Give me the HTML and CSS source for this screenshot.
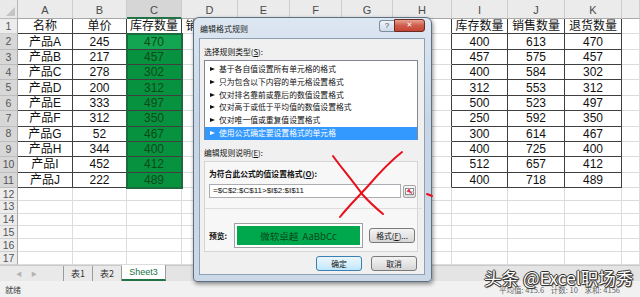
FILE: index.html
```html
<!DOCTYPE html>
<html lang="zh-CN">
<head>
<meta charset="utf-8">
<title>编辑格式规则</title>
<link rel="stylesheet" href="styles.css">
</head>
<body>
<div class="app">
  <div class="sheet">
    <div class="corner"><span class="tri"></span></div>
    <div class="ch">A</div><div class="ch">B</div><div class="ch sel">C</div><div class="ch">D</div><div class="ch">E</div><div class="ch">F</div><div class="ch">G</div><div class="ch">H</div><div class="ch">I</div><div class="ch">J</div><div class="ch">K</div><div class="ch"></div>

    <div class="rh">1</div><div class="c bd">名称</div><div class="c bd">单价</div><div class="c bd">库存数量</div><div class="c">销售数量</div><div class="c"></div><div class="c"></div><div class="c"></div><div class="c bl"></div><div class="c bd">库存数量</div><div class="c bd">销售数量</div><div class="c bd">退货数量</div><div class="c"></div>

    <div class="rh rs">2</div><div class="c bd">产品A</div><div class="c bd">245</div><div class="c bd g act">470</div><div class="c"></div><div class="c"></div><div class="c"></div><div class="c"></div><div class="c bl"></div><div class="c bd">400</div><div class="c bd">613</div><div class="c bd">470</div><div class="c"></div>
    <div class="rh rs">3</div><div class="c bd">产品B</div><div class="c bd">217</div><div class="c bd g">457</div><div class="c"></div><div class="c"></div><div class="c"></div><div class="c"></div><div class="c bl"></div><div class="c bd">457</div><div class="c bd">575</div><div class="c bd">457</div><div class="c"></div>
    <div class="rh rs">4</div><div class="c bd">产品C</div><div class="c bd">278</div><div class="c bd g">302</div><div class="c"></div><div class="c"></div><div class="c"></div><div class="c"></div><div class="c bl"></div><div class="c bd">400</div><div class="c bd">584</div><div class="c bd">302</div><div class="c"></div>
    <div class="rh rs">5</div><div class="c bd">产品D</div><div class="c bd">200</div><div class="c bd g">312</div><div class="c"></div><div class="c"></div><div class="c"></div><div class="c"></div><div class="c bl"></div><div class="c bd">312</div><div class="c bd">553</div><div class="c bd">312</div><div class="c"></div>
    <div class="rh rs">6</div><div class="c bd">产品E</div><div class="c bd">333</div><div class="c bd g">497</div><div class="c"></div><div class="c"></div><div class="c"></div><div class="c"></div><div class="c bl"></div><div class="c bd">500</div><div class="c bd">523</div><div class="c bd">497</div><div class="c"></div>
    <div class="rh rs">7</div><div class="c bd">产品F</div><div class="c bd">312</div><div class="c bd g">350</div><div class="c"></div><div class="c"></div><div class="c"></div><div class="c"></div><div class="c bl"></div><div class="c bd">250</div><div class="c bd">592</div><div class="c bd">350</div><div class="c"></div>
    <div class="rh rs">8</div><div class="c bd">产品G</div><div class="c bd">52</div><div class="c bd g">467</div><div class="c"></div><div class="c"></div><div class="c"></div><div class="c"></div><div class="c bl"></div><div class="c bd">300</div><div class="c bd">614</div><div class="c bd">467</div><div class="c"></div>
    <div class="rh rs">9</div><div class="c bd">产品H</div><div class="c bd">344</div><div class="c bd g">400</div><div class="c"></div><div class="c"></div><div class="c"></div><div class="c"></div><div class="c bl"></div><div class="c bd">400</div><div class="c bd">725</div><div class="c bd">400</div><div class="c"></div>
    <div class="rh rs">10</div><div class="c bd">产品I</div><div class="c bd">452</div><div class="c bd g">412</div><div class="c"></div><div class="c"></div><div class="c"></div><div class="c"></div><div class="c bl"></div><div class="c bd">512</div><div class="c bd">657</div><div class="c bd">412</div><div class="c"></div>
    <div class="rh rs">11</div><div class="c bd">产品J</div><div class="c bd">222</div><div class="c bd g">489</div><div class="c"></div><div class="c"></div><div class="c"></div><div class="c"></div><div class="c bl"></div><div class="c bd">400</div><div class="c bd">718</div><div class="c bd">489</div><div class="c"></div>

    <div class="rh">12</div><div class="c"></div><div class="c"></div><div class="c"></div><div class="c"></div><div class="c"></div><div class="c"></div><div class="c"></div><div class="c"></div><div class="c"></div><div class="c"></div><div class="c"></div><div class="c"></div>
    <div class="rh">13</div><div class="c"></div><div class="c"></div><div class="c"></div><div class="c"></div><div class="c"></div><div class="c"></div><div class="c"></div><div class="c"></div><div class="c"></div><div class="c"></div><div class="c"></div><div class="c"></div>
    <div class="rh">14</div><div class="c"></div><div class="c"></div><div class="c"></div><div class="c"></div><div class="c"></div><div class="c"></div><div class="c"></div><div class="c"></div><div class="c"></div><div class="c"></div><div class="c"></div><div class="c"></div>
    <div class="rh">15</div><div class="c"></div><div class="c"></div><div class="c"></div><div class="c"></div><div class="c"></div><div class="c"></div><div class="c"></div><div class="c"></div><div class="c"></div><div class="c"></div><div class="c"></div><div class="c"></div>
    <div class="rh">16</div><div class="c"></div><div class="c"></div><div class="c"></div><div class="c"></div><div class="c"></div><div class="c"></div><div class="c"></div><div class="c"></div><div class="c"></div><div class="c"></div><div class="c"></div><div class="c"></div>
    <div class="rh">17</div><div class="c"></div><div class="c"></div><div class="c"></div><div class="c"></div><div class="c"></div><div class="c"></div><div class="c"></div><div class="c"></div><div class="c"></div><div class="c"></div><div class="c"></div><div class="c"></div>
  </div>

  <div class="tabs">
    <div class="nav"><span class="arr">◀</span><span class="arr">▶</span></div>
    <div class="tab">表1</div>
    <div class="tab">表2</div>
    <div class="tab active">Sheet3</div>
    <div class="scroll"></div>
  </div>
  <div class="status">
    <span class="ready">就绪</span>
    <span class="stats">平均值: 415.6&nbsp;&nbsp;&nbsp;&nbsp;计数: 10&nbsp;&nbsp;&nbsp;&nbsp;求和: 4156</span>
  </div>

  <div class="selbox"></div>

  <div class="dlg">
    <div class="dlg-title">
      <span class="dlg-name">编辑格式规则</span>
      <div class="dlg-btns"><span class="help">?</span><span class="close">✕</span></div>
    </div>
    <div class="dlg-body">
      <div class="lbl">选择规则类型(<u>S</u>):</div>
      <ul class="list">
        <li>基于各自值设置所有单元格的格式</li>
        <li>只为包含以下内容的单元格设置格式</li>
        <li>仅对排名靠前或靠后的数值设置格式</li>
        <li>仅对高于或低于平均值的数值设置格式</li>
        <li>仅对唯一值或重复值设置格式</li>
        <li class="on">使用公式确定要设置格式的单元格</li>
      </ul>
      <div class="lbl lbl2">编辑规则说明(<u>E</u>):</div>
      <div class="group">
        <div class="bold">为符合此公式的值设置格式(<u>O</u>):</div>
        <div class="frow">
          <div class="input">=$C$2:$C$11&gt;$I$2:$I$11</div>
          <span class="pick"><svg width="11" height="11" viewBox="0 0 11 11"><rect x="1.5" y="2.5" width="8" height="6" fill="#fff" stroke="#8a8a8a"/><line x1="1.5" y1="5.5" x2="9.5" y2="5.5" stroke="#c8c8c8"/><line x1="5.5" y1="2.5" x2="5.5" y2="8.5" stroke="#c8c8c8"/><path d="M8 7.5 L4 4 M4 4 L4 6.2 M4 4 L6.2 4" stroke="#e0304a" stroke-width="1.4" fill="none"/></svg></span>
        </div>
        <div class="sep"></div>
        <div class="prow">
          <span class="bold">预览:</span>
          <div class="preview"><span>微软卓越&nbsp;&nbsp;AaBbCc</span></div>
          <button class="btn fmt">格式(<u>F</u>)...</button>
        </div>
      </div>
      <div class="actions">
        <button class="btn ok">确定</button>
        <button class="btn">取消</button>
      </div>
    </div>
  </div>

  <svg class="ink" width="640" height="297" viewBox="0 0 640 297">
    <path d="M333 156 C 340 166, 352 180, 362 194 C 370 203, 377 209, 383 214" stroke="#e8101c" stroke-width="2" fill="none" stroke-linecap="round"/>
    <path d="M402 152 C 392 160, 380 172, 368 186 C 357 198, 347 208, 340 217" stroke="#e8101c" stroke-width="2" fill="none" stroke-linecap="round"/>
    <path d="M427 194 L432 196" stroke="#e8101c" stroke-width="2" fill="none" stroke-linecap="round"/>
  </svg>

  <div class="wm">头条 @Excel职场秀</div>
</div>
</body>
</html>
```

FILE: styles.css
```css
* { box-sizing: border-box; }
html, body { margin: 0; padding: 0; }
body {
  width: 640px;
  height: 297px;
  overflow: hidden;
  background: #fff;
  font-family: "Liberation Sans", "Noto Sans CJK SC", sans-serif;
}
.app {
  position: relative;
  width: 640px;
  height: 297px;
  display: flex;
  flex-direction: column;
}

/* ---------- sheet grid ---------- */
.sheet {
  display: grid;
  grid-template-columns: 18px 55px 54px 55px 56px 52px 52px 51px 59px 56px 57px 57px 18px;
  grid-template-rows: 19px repeat(11, 15.36px) repeat(6, 12.8px);
  height: 265px;
  overflow: hidden;
}
.corner {
  background: #e9e9e9;
  border-right: 1px solid #b8b8b8;
  border-bottom: 1px solid #b8b8b8;
  position: relative;
}
.corner .tri {
  position: absolute;
  right: 2px;
  bottom: 2px;
  width: 0;
  height: 0;
  border-left: 9px solid transparent;
  border-bottom: 9px solid #c4c4c4;
}
.ch {
  background: #ebebeb;
  border-right: 1px solid #cdcdcd;
  border-bottom: 1px solid #a9a9a9;
  color: #4a4a4a;
  font-size: 11px;
  display: flex;
  align-items: flex-end;
  justify-content: center;
  padding-bottom: 2px;
  line-height: 12px;
}
.ch.sel {
  background: #d6d6d6;
  border-bottom: 2px solid #217346;
  padding-bottom: 1px;
}
.rh {
  background: #ececec;
  border-right: 1px solid #a9a9a9;
  border-bottom: 1px solid #d0d0d0;
  color: #555;
  font-size: 10.5px;
  display: flex;
  align-items: center;
  justify-content: center;
  line-height: 1;
}
.rh.rs { background: #d7d7d7; border-bottom-color: #bdbdbd; }
.c {
  border-right: 1px solid #dcdcdc;
  border-bottom: 1px solid #dcdcdc;
  font-size: 12px;
  color: #111;
  display: flex;
  align-items: center;
  justify-content: center;
  white-space: nowrap;
  overflow: hidden;
  line-height: 1;
}
.c.bd { border-right-color: #3f3f3f; border-bottom-color: #3f3f3f; }
.c.bl { border-right-color: #3f3f3f; }
.c.g { background: #07923f; color: #0a4a1a; }
.c.g.act { background: #13a551; }

.selbox {
  position: absolute;
  left: 126px;
  top: 33px;
  width: 57px;
  height: 156px;
  border: 2px solid #1d6a3c;
  pointer-events: none;
}

/* ---------- tabs & status ---------- */
.tabs {
  display: flex;
  height: 16px;
  background: #e9e9e9;
  border-top: 1px solid #c9c9c9;
  font-family: "Noto Sans CJK SC", "Liberation Sans", sans-serif;
  font-size: 9px;
  color: #333;
}
.nav {
  width: 64px;
  display: flex;
  align-items: center;
  gap: 9px;
  padding-left: 16px;
  border-right: 1px solid #9a9a9a;
}
.arr { font-size: 6px; color: #b4b4b4; }
.tab {
  display: flex;
  align-items: center;
  justify-content: center;
  width: 29px;
  border-right: 1px solid #9a9a9a;
  line-height: 1;
}
.tab.active {
  width: 44px;
  background: #fff;
  color: #217346;
  border-bottom: 2px solid #217346;
  margin-top: -1px;
  font-family: "Liberation Sans", "Noto Sans CJK SC", sans-serif;
}
.scroll { flex: 1; background: #e4e4e4; }
.status {
  height: 16px;
  background: #f1f1f1;
  display: flex;
  align-items: center;
  justify-content: space-between;
  padding: 0 20px 0 5px;
  font-family: "Noto Sans CJK SC", sans-serif;
  font-size: 8px;
  color: #444;
}
.stats { color: #666; font-size: 7.5px; }

/* ---------- dialog ---------- */
.dlg {
  position: absolute;
  left: 193px;
  top: 17px;
  width: 239px;
  height: 265px;
  background: linear-gradient(#dde7f2, #c7d5e5 40%, #cbd8e7);
  border: 1px solid #5f6f82;
  border-radius: 6px 6px 4px 4px;
  box-shadow: 1px 2px 4px rgba(0,0,0,0.45);
  padding: 0 6px 6px 5px;
  display: flex;
  flex-direction: column;
  font-family: "Noto Sans CJK SC", "Liberation Sans", sans-serif;
  font-size: 7.8px;
  color: #111;
}
.dlg-title {
  height: 20px;
  display: flex;
  align-items: center;
  justify-content: space-between;
  flex: none;
}
.dlg-name { padding-left: 1px; font-size: 8px; color: #222; }
.dlg-btns { display: flex; align-self: flex-start; margin-top: 2px; }
.help {
  width: 15px;
  height: 12px;
  border: 1px solid #7d8ea3;
  border-right: none;
  border-radius: 3px 0 0 3px;
  background: linear-gradient(#eef3f8, #cfdbe8);
  font-family: "Liberation Sans", sans-serif;
  font-size: 8px;
  color: #3a4a5e;
  display: flex;
  align-items: center;
  justify-content: center;
  line-height: 1;
}
.close {
  width: 31px;
  height: 13px;
  margin-top: -1px;
  border: 1px solid #6b2a22;
  border-radius: 0 3px 3px 0;
  background: linear-gradient(#e8a394, #cf5d4c 50%, #c44433);
  color: #fff;
  font-family: "DejaVu Sans", sans-serif;
  font-size: 7px;
  font-weight: bold;
  display: flex;
  align-items: center;
  justify-content: center;
  line-height: 1;
}
.dlg-body {
  flex: 1;
  background: #f0f0f0;
  border: 1px solid #8fa0b4;
  padding: 0 6px 0 4px;
  display: flex;
  flex-direction: column;
}
.lbl { line-height: 10px; margin-top: 8px; white-space: nowrap; }
.lbl2 { margin-top: 8px; }
u { text-decoration: underline; }
.list {
  list-style: none;
  margin: 3px 0 0 0;
  padding: 2px 0 0 0;
  height: 80px;
  background: #fff;
  border: 1px solid #828790;
}
.list li {
  height: 12.8px;
  line-height: 12.8px;
  padding-left: 14px;
  position: relative;
  white-space: nowrap;
}
.list li::before {
  content: "";
  position: absolute;
  left: 5px;
  top: 4px;
  border-left: 5px solid #111;
  border-top: 2.5px solid transparent;
  border-bottom: 2.5px solid transparent;
}
.list li.on { background: #3399ff; color: #fff; }
.list li.on::before { border-left-color: #fff; }

.group {
  margin-top: 3px;
  height: 91px;
  border: 1px solid #d5d5d5;
  background: #f7f7f7;
  padding: 7px 0 0 4px;
  display: flex;
  flex-direction: column;
}
.bold { font-weight: bold; line-height: 10px; white-space: nowrap; }
.frow { display: flex; margin-top: 5px; align-items: center; }
.input {
  width: 192px;
  height: 14px;
  background: #fff;
  border: 1px solid #abadb3;
  padding-left: 3px;
  font-family: "Liberation Sans", sans-serif;
  font-size: 8px;
  line-height: 12px;
}
.pick {
  margin-left: 2px;
  width: 13px;
  height: 13px;
  border: 1px solid #a5a5a5;
  border-radius: 2px;
  background: linear-gradient(#f6f6f6, #dedede);
  display: flex;
  align-items: center;
  justify-content: center;
}
.sep {
  margin: 10px 0 0 -4px;
  height: 1px;
  background: #dcdcdc;
  width: 217px;
}
.prow { display: flex; align-items: center; margin-top: 14px; }
.prow .bold { width: 25px; }
.preview {
  width: 129px;
  height: 25px;
  border: 1px solid #a0a0a0;
  background: #fff;
  padding: 2px;
}
.preview span {
  display: flex;
  align-items: center;
  justify-content: center;
  height: 100%;
  background: #00a84d;
  color: #064a18;
  font-size: 9.5px;
  white-space: nowrap;
}
.btn {
  font-family: "Noto Sans CJK SC", "Liberation Sans", sans-serif;
  font-size: 7.8px;
  color: #111;
  height: 15px;
  padding: 0;
  border: 1px solid #7a7a7a;
  border-radius: 3px;
  background: linear-gradient(#f3f3f3, #e6e6e6 50%, #d6d6d6);
  line-height: 1;
}
.fmt { width: 46px; margin-left: 6px; }
.actions {
  display: flex;
  justify-content: flex-end;
  gap: 9px;
  margin-top: 4px;
  padding-right: 1px;
}
.actions .btn { width: 46px; }
.btn.ok {
  border-color: #3c7fb1;
  background: linear-gradient(#eaf6fd, #d9f0fc 50%, #bee6fd);
}

/* ---------- overlays ---------- */
.ink {
  position: absolute;
  left: 0;
  top: 0;
  pointer-events: none;
}
.wm {
  position: absolute;
  left: 484px;
  top: 268px;
  font-family: "Noto Sans CJK SC", sans-serif;
  font-size: 17.5px;
  line-height: 20px;
  color: #fff;
  white-space: nowrap;
  text-shadow: 1px 0 0 #333, -1px 0 0 #333, 0 1px 0 #333, 0 -1px 0 #333, 1px 1px 1px #222;
}
```
